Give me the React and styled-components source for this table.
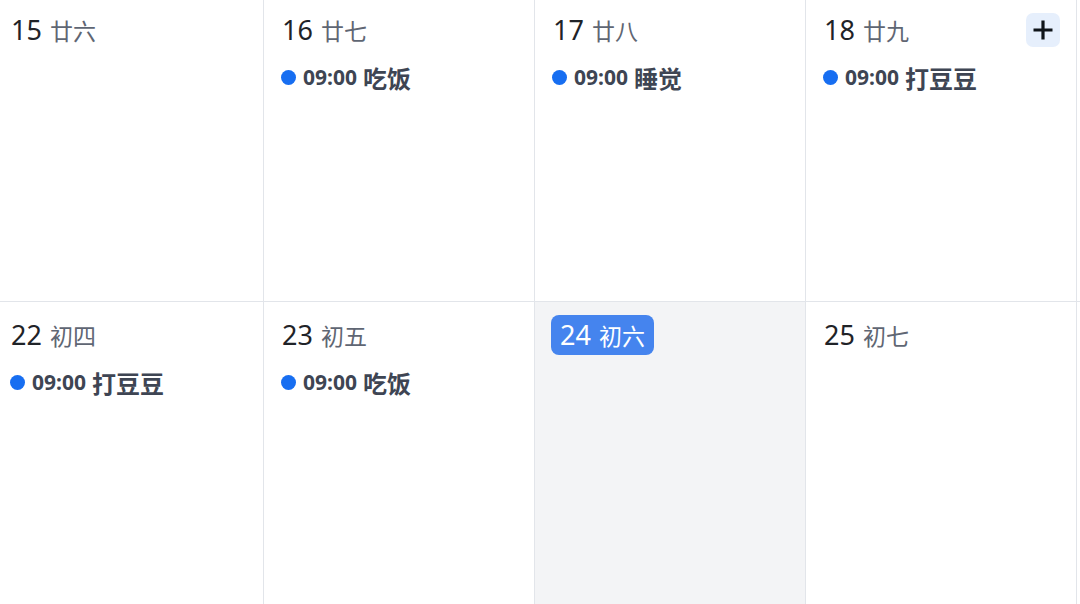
import React from "react";
import styled, { createGlobalStyle } from "styled-components";

const GlobalStyle = createGlobalStyle`
  html, body {
    margin: 0;
    padding: 0;
    background: #ffffff;
    overflow: hidden;
  }
  body {
    font-family: "Noto Sans", "Noto Sans CJK SC", sans-serif;
  }
  * { box-sizing: border-box; }
`;

const Viewport = styled.div`
  width: 1080px;
  height: 604px;
  overflow: hidden;
`;

const Grid = styled.div`
  display: grid;
  grid-template-columns: repeat(5, 271px);
  grid-auto-rows: 305px;
  margin: -3px 0 0 -7px;
  width: max-content;
`;

const Cell = styled.div`
  border-right: 1px solid #e2e5ea;
  border-bottom: 1px solid #e2e5ea;
  background: ${(p) => (p.$today ? "#f3f4f6" : "#ffffff")};
  padding: 13px 16px;
  display: flex;
  flex-direction: column;
  gap: 12px;
`;

const Header = styled.div`
  display: flex;
  align-items: center;
  justify-content: space-between;
  height: 40px;
`;

const DateLabel = styled.div`
  display: inline-flex;
  align-items: baseline;
  gap: 8px;
  height: 40px;
  line-height: 40px;
  padding: 0 ${(p) => (p.$today ? "9px" : "2px")};
  border-radius: 8px;
  background: ${(p) => (p.$today ? "#4584ee" : "transparent")};
  color: ${(p) => (p.$today ? "#ffffff" : "#1f2328")};
`;

const DayNum = styled.span`
  font-family: "Noto Sans", sans-serif;
  font-size: 27px;
  font-weight: 400;
`;

const Lunar = styled.span`
  font-family: "Noto Sans CJK SC", sans-serif;
  font-size: 23px;
  font-weight: 400;
  color: ${(p) => (p.$today ? "#ffffff" : "#5f6673")};
`;

const AddButton = styled.button`
  width: 34px;
  height: 34px;
  border: none;
  border-radius: 7px;
  background: #e6effc;
  display: flex;
  align-items: center;
  justify-content: center;
  padding: 0;
  cursor: pointer;
`;

const EventRow = styled.div`
  display: flex;
  align-items: center;
  gap: 7px;
  height: 30px;
  color: #3e4553;
  font-weight: 700;
`;

const Dot = styled.span`
  width: 15px;
  height: 15px;
  border-radius: 50%;
  background: #176ef1;
  flex: none;
  margin-left: 1px;
`;

const Time = styled.span`
  font-family: "Noto Sans", sans-serif;
  font-size: 21px;
  font-weight: 700;
`;

const Title = styled.span`
  font-family: "Noto Sans CJK SC", sans-serif;
  font-size: 24px;
  font-weight: 700;
  margin-left: -1px;
`;

const PlusIcon = () => (
  <svg width="22" height="22" viewBox="0 0 22 22">
    <path d="M11 1.5V20.5M1.5 11H20.5" stroke="#0f1419" strokeWidth="3.2" strokeLinecap="butt" />
  </svg>
);

const days = [
  { d: 15, l: "廿六" },
  { d: 16, l: "廿七", ev: { t: "09:00", n: "吃饭" } },
  { d: 17, l: "廿八", ev: { t: "09:00", n: "睡觉" } },
  { d: 18, l: "廿九", ev: { t: "09:00", n: "打豆豆" }, add: true },
  { d: 19, hidden: true },
  { d: 22, l: "初四", ev: { t: "09:00", n: "打豆豆" } },
  { d: 23, l: "初五", ev: { t: "09:00", n: "吃饭" } },
  { d: 24, l: "初六", today: true },
  { d: 25, l: "初七" },
  { d: 26, hidden: true },
];

export default function App() {
  return (
    <Viewport>
      <GlobalStyle />
      <Grid>
        {days.map((day) => (
          <Cell key={day.d} $today={day.today}>
            {!day.hidden && (
              <Header>
                <DateLabel $today={day.today}>
                  <DayNum>{day.d}</DayNum>
                  <Lunar $today={day.today}>{day.l}</Lunar>
                </DateLabel>
                {day.add && (
                  <AddButton aria-label="add">
                    <PlusIcon />
                  </AddButton>
                )}
              </Header>
            )}
            {day.ev && (
              <EventRow>
                <Dot />
                <Time>{day.ev.t}</Time>
                <Title>{day.ev.n}</Title>
              </EventRow>
            )}
          </Cell>
        ))}
      </Grid>
    </Viewport>
  );
}
